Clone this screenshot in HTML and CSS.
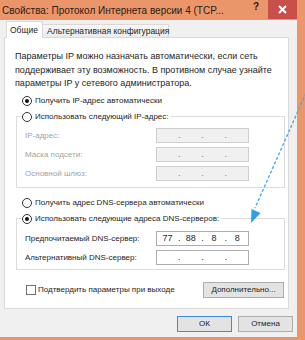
FILE: index.html
```html
<!DOCTYPE html>
<html lang="ru">
<head>
	<meta charset="UTF-8">
	<title>Свойства: Протокол Интернета версии 4</title>
	<link rel="stylesheet" href="styles.css">
</head>
<body>
	<div class="window">
		<div class="titlebar">
			<div class="caption">Свойства: Протокол Интернета версии 4 (TCP...</div>
			<div class="caption-help">?</div>
			<svg class="caption-x" width="29" height="19" viewBox="0 0 29 19">
				<rect x="0" y="0" width="29" height="19" fill="#c9504a"/>
				<path d="M11 6 L18 13 M18 6 L11 13" stroke="#fff" stroke-width="2"/>
			</svg>
		</div>

		<div class="client">
			<div class="tabs">
				<div class="tab active">Общие</div>
				<div class="tab">Альтернативная конфигурация</div>
			</div>

			<div class="panel">
				<p class="intro">Параметры IP можно назначать автоматически, если сеть<br>поддерживает эту возможность. В противном случае узнайте<br>параметры IP у сетевого администратора.</p>

				<div class="option first"><span class="radio on"></span>Получить IP-адрес автоматически</div>

				<fieldset class="group ip-group">
					<legend class="option"><span class="radio"></span>Использовать следующий IP-адрес:</legend>
					<div class="field disabled">
						<span class="label">IP-адрес:</span>
						<span class="ip"><i></i><b>.</b><i></i><b>.</b><i></i><b>.</b><i></i></span>
					</div>
					<div class="field disabled">
						<span class="label">Маска подсети:</span>
						<span class="ip"><i></i><b>.</b><i></i><b>.</b><i></i><b>.</b><i></i></span>
					</div>
					<div class="field disabled">
						<span class="label">Основной шлюз:</span>
						<span class="ip"><i></i><b>.</b><i></i><b>.</b><i></i><b>.</b><i></i></span>
					</div>
				</fieldset>

				<div class="option dns-auto"><span class="radio"></span>Получить адрес DNS-сервера автоматически</div>

				<fieldset class="group dns-group">
					<legend class="option"><span class="radio on"></span>Использовать следующие адреса DNS-серверов:</legend>
					<div class="field">
						<span class="label">Предпочитаемый DNS-сервер:</span>
						<span class="ip"><i>77</i><b>.</b><i>88</i><b>.</b><i>8</i><b>.</b><i>8</i></span>
					</div>
					<div class="field">
						<span class="label">Альтернативный DNS-сервер:</span>
						<span class="ip"><i></i><b>.</b><i></i><b>.</b><i></i><b>.</b><i></i></span>
					</div>
				</fieldset>

				<div class="bottom-row">
					<div class="check-row"><span class="checkbox"></span>Подтвердить параметры при выходе</div>
					<div class="button">Дополнительно...</div>
				</div>
			</div>

			<div class="footer">
				<div class="button ok">ОК</div>
				<div class="button">Отмена</div>
			</div>
		</div>

		<svg class="arrow" width="305" height="340" viewBox="0 0 305 340">
			<line x1="306" y1="93" x2="255" y2="208" stroke="#45ade9" stroke-width="1.4" stroke-dasharray="3 2"/>
			<polygon points="251,223 251.5,209 260.5,213" fill="#2f9fe6"/>
		</svg>
	</div>
</body>
</html>
```

FILE: styles.css
```css
* {
	box-sizing: border-box;
}

html,
body {
	margin: 0;
	width: 305px;
	height: 340px;
	overflow: hidden;
	background: #ea956a;
	font: 8px 'Liberation Sans', Arial, sans-serif;
	color: #1e1e1e;
}

.window {
	position: relative;
	width: 305px;
	height: 340px;
}

/* title bar */
.titlebar {
	display: flex;
	align-items: flex-start;
	height: 20px;
	padding: 0 8px 0 2px;
}

.caption {
	flex: 1 1 0;
	min-width: 0;
	padding-top: 4px;
	font-size: 10px;
	line-height: 13px;
	color: #2a1d16;
	white-space: nowrap;
	overflow: hidden;
}

.caption-help {
	flex: 0 0 auto;
	margin: 1px 9px 0 4px;
	font: bold 10px 'Liberation Sans', Arial, sans-serif;
	color: #2a1d16;
}

.caption-x {
	flex: 0 0 29px;
	display: block;
}

/* client area */
.client {
	width: 297px;
	height: 317px;
	background: #f0f0f0;
}

.tabs {
	display: flex;
	align-items: flex-end;
	height: 18px;
	margin-bottom: -1px;
	padding-left: 6px;
	position: relative;
	z-index: 1;
	font-size: 8.5px;
}

.tab {
	height: 13px;
	margin-bottom: 1px;
	padding: 0 4px;
	border: 1px solid #d9d9d9;
	border-bottom: none;
	background: linear-gradient(#f7f7f7, #ebebeb);
	line-height: 12px;
	white-space: nowrap;
}

.tab.active {
	height: 17px;
	margin-bottom: 0;
	margin-right: -1px;
	width: 37px;
	background: #fff;
	line-height: 16px;
	padding: 0 3px;
}

.tab + .tab {
	width: 127px;
}

.panel {
	width: 285px;
	height: 272px;
	margin-left: 4px;
	border: 1px solid #d9d9d9;
	background: #fff;
}

.intro {
	margin: 12px 0 0 10px;
	font-size: 9px;
	line-height: 13.5px;
}

.option {
	display: flex;
	align-items: center;
	height: 12px;
	padding: 0;
	margin-left: 17px;
	white-space: nowrap;
}

.option.first {
	margin-top: 4px;
}

.radio {
	width: 10px;
	height: 10px;
	margin-right: 3px;
	border: 1px solid #333;
	border-radius: 50%;
	background: #fff;
	position: relative;
}

.radio.on::after {
	content: '';
	position: absolute;
	left: 2px;
	top: 2px;
	width: 4px;
	height: 4px;
	border-radius: 50%;
	background: #111;
}

.group {
	width: 269px;
	margin: 0 0 0 11px;
	padding: 0 0 0 5px;
	border: 1px solid #dcdcdc;
}

.group legend.option {
	margin-left: 0;
	padding-right: 2px;
}

.ip-group {
	margin-top: 4px;
	padding-bottom: 6px;
}

.dns-group {
	margin-top: 4px;
	padding-bottom: 4px;
}

.field {
	display: flex;
	align-items: center;
	height: 15px;
	margin-top: 4px;
	padding-left: 3px;
}

.field:first-of-type {
	margin-top: 5px;
}

.dns-group .field:first-of-type {
	margin-top: 6px;
}

.label {
	width: 131px;
	white-space: nowrap;
}

.ip {
	display: flex;
	width: 93px;
	height: 15px;
	padding: 0 1px;
	border: 1px solid #abadb3;
	background: #fff;
	line-height: 13px;
	font-size: 9px;
}

.ip i {
	flex: 1;
	font-style: normal;
	text-align: center;
}

.ip b {
	width: 4px;
	font-weight: normal;
	text-align: center;
}

.disabled .label {
	color: #a3a3a3;
}

.disabled .ip {
	border-color: #cfcfcf;
	background: #f0f0f0;
	color: #7a7a7a;
}

.dns-auto {
	margin-top: 9px;
}

.bottom-row {
	display: flex;
	align-items: center;
	justify-content: space-between;
	margin: 12px 4px 0 21px;
}

.check-row {
	display: flex;
	align-items: center;
}

.checkbox {
	width: 10px;
	height: 10px;
	margin-right: 2px;
	border: 1px solid #707070;
	background: #fff;
}

.button {
	height: 16px;
	padding: 0 5px;
	border: 1px solid #adadad;
	background: #e3e3e3;
	line-height: 14px;
	text-align: center;
}

.bottom-row .button {
	width: 81px;
}

/* dialog buttons */
.footer {
	display: flex;
	justify-content: flex-end;
	gap: 6px;
	margin: 7px 4px 0 0;
}

.footer .button {
	width: 55px;
}

.button.ok {
	border-color: #3c8ce4;
}

.arrow {
	position: absolute;
	left: 0;
	top: 0;
	pointer-events: none;
}
```
